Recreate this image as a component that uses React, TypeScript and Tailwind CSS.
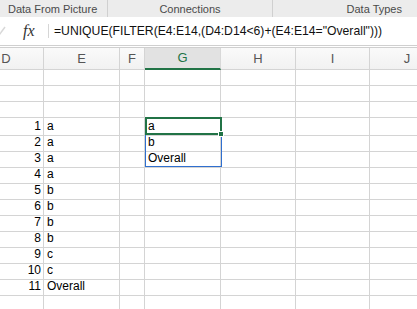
const cols = ['D', 'E', 'F', 'G', 'H', 'I', 'J'];

const rows: { n?: string; e?: string; g?: string }[] = [
  {},
  {},
  {},
  { n: '1', e: 'a', g: 'a' },
  { n: '2', e: 'a', g: 'b' },
  { n: '3', e: 'a', g: 'Overall' },
  { n: '4', e: 'a' },
  { n: '5', e: 'b' },
  { n: '6', e: 'b' },
  { n: '7', e: 'b' },
  { n: '8', e: 'b' },
  { n: '9', e: 'c' },
  { n: '10', e: 'c' },
  { n: '11', e: 'Overall' },
  {},
];

const gridCols = 'grid grid-cols-[75px_76px_25px_76px_75px_74px_75px]';

export default function App() {
  return (
    <div className="w-[417px] h-[309px] overflow-hidden bg-white font-['Liberation_Sans',Arial,sans-serif] text-black">
      {/* ribbon group labels */}
      <div className="flex h-[17px] bg-[#ececec] text-[11px] text-[#4a4a4a]">
        <div className="w-[108px] shrink-0 border-r border-[#d0d0d0] pl-[8px] pt-[3px] leading-[13px]">Data From Picture</div>
        <div className="w-[165px] shrink-0 border-r border-[#d0d0d0] pt-[3px] text-center leading-[13px]">Connections</div>
        <div className="flex-1 pr-[15px] pt-[3px] text-right leading-[13px]">Data Types</div>
      </div>

      {/* formula bar */}
      <div className="flex h-[31px] items-center border-b-[3px] border-double border-[#cfcfcf] bg-white">
        <svg className="ml-[-2px] h-[10px] w-[8px]" viewBox="0 0 8 10">
          <path d="M1 9 L7 1" stroke="#d8d8d8" strokeWidth="1.5" />
        </svg>
        <span className="ml-[17px] w-[15px] font-['Liberation_Serif',serif] text-[16px] italic text-[#333]">fx</span>
        <div className="ml-[10px] h-[14px] w-px bg-[#d6d6d6]" />
        <span className="ml-[5px] whitespace-nowrap text-[12.2px] text-[#111]">
          =UNIQUE(FILTER(E4:E14,(D4:D14&lt;6)+(E4:E14="Overall")))
        </span>
      </div>

      <div className="-ml-[31px]">
        {/* column headers */}
        <div className={`${gridCols} h-[22px] bg-gradient-to-b from-[#fafafa] to-[#f1f1f1] text-[13px] text-[#555]`}>
          {cols.map((c) => (
            <div
              key={c}
              className={
                c === 'G'
                  ? 'flex items-center justify-center border-r border-[#d8d8d8] border-b-2 border-b-[#217346] bg-[#e2e2e2] text-[#217346]'
                  : 'flex items-center justify-center border-r border-b border-[#d4d4d4]'
              }
            >
              {c}
            </div>
          ))}
        </div>

        {/* cells */}
        <div className="relative">
          {rows.map((r, i) => (
            <div key={i} className={`${gridCols} h-[16px] text-[12px] leading-[17px]`}>
              <div className="border-r border-b border-[#d4d4d4] pr-[2px] text-right">{r.n}</div>
              <div className="border-r border-b border-[#d4d4d4] pl-[3px]">{r.e}</div>
              <div className="border-r border-b border-[#d4d4d4]" />
              <div className="border-r border-b border-[#d4d4d4] pl-[3px]">{r.g}</div>
              <div className="border-r border-b border-[#d4d4d4]" />
              <div className="border-r border-b border-[#d4d4d4]" />
              <div className="border-r border-b border-[#d4d4d4]" />
            </div>
          ))}

          {/* spill range + active cell */}
          <div className="pointer-events-none absolute left-[176px] top-[48px] h-[49px] w-[77px] border border-[#2f6fcf]" />
          <div className="pointer-events-none absolute left-[176px] top-[47px] h-[18px] w-[77px] border-2 border-[#217346]">
            <div className="absolute -bottom-[4px] -right-[4px] h-[6px] w-[6px] border border-white bg-[#217346]" />
          </div>
        </div>
      </div>
    </div>
  );
}
